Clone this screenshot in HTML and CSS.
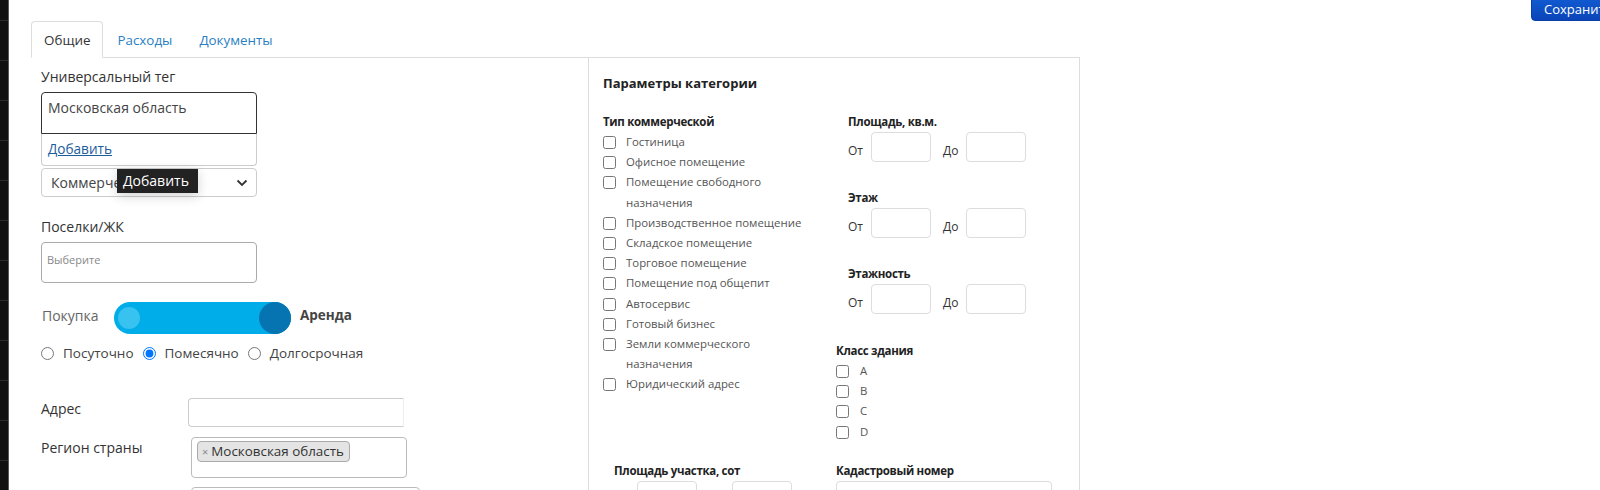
FILE: index.html
```html
<!DOCTYPE html>
<html lang="ru">
<head>
<meta charset="utf-8">
<title>Объект</title>
<link rel="stylesheet" href="styles.css">
</head>
<body>
<div class="page">
  <aside class="sidebar"></aside>
  <main class="main">
    <div class="wrap">
      <nav class="tabs">
        <a class="tab active">Общие</a>
        <a class="tab">Расходы</a>
        <a class="tab">Документы</a>
      </nav>
      <div class="content">
        <section class="left">
          <div class="label">Универсальный тег</div>
          <div class="taginput">Московская область</div>
          <div class="suggest"><a class="link">Добавить</a></div>
          <div class="select">
            <span>Коммерческая</span>
            <svg class="chev" width="12" height="8" viewBox="0 0 12 8"><path d="M1.5 1.5 6 6l4.5-4.5" fill="none" stroke="#333" stroke-width="1.8"/></svg>
            <div class="tooltip">Добавить</div>
          </div>

          <div class="label gap20">Поселки/ЖК</div>
          <div class="multi"><span class="ph">Выберите</span></div>

          <div class="toggle-row">
            <span class="tl">Покупка</span>
            <div class="toggle"><span class="dot"></span><span class="knob"></span></div>
            <span class="tr">Аренда</span>
          </div>

          <div class="radios">
            <label class="radio"><input type="radio" name="r">Посуточно</label>
            <label class="radio"><input type="radio" name="r" checked>Помесячно</label>
            <label class="radio"><input type="radio" name="r">Долгосрочная</label>
          </div>

          <div class="row row-addr">
            <span class="rl">Адрес</span>
            <div class="inp"></div>
          </div>
          <div class="row row-reg">
            <span class="rl">Регион страны</span>
            <div class="box"><span class="tag"><span class="x">×</span>Московская область</span></div>
          </div>
          <div class="row row-next">
            <span class="rl"></span>
            <div class="box2"></div>
          </div>
        </section>

        <section class="panel">
          <h3 class="ptitle">Параметры категории</h3>
          <div class="pgrid">
            <div class="pcol">
              <div class="h">Тип коммерческой</div>
              <label class="cb"><input type="checkbox"><span>Гостиница</span></label>
              <label class="cb"><input type="checkbox"><span>Офисное помещение</span></label>
              <label class="cb"><input type="checkbox"><span>Помещение свободного назначения</span></label>
              <label class="cb"><input type="checkbox"><span>Производственное помещение</span></label>
              <label class="cb"><input type="checkbox"><span>Складское помещение</span></label>
              <label class="cb"><input type="checkbox"><span>Торговое помещение</span></label>
              <label class="cb"><input type="checkbox"><span>Помещение под общепит</span></label>
              <label class="cb"><input type="checkbox"><span>Автосервис</span></label>
              <label class="cb"><input type="checkbox"><span>Готовый бизнес</span></label>
              <label class="cb"><input type="checkbox"><span>Земли коммерческого назначения</span></label>
              <label class="cb"><input type="checkbox"><span>Юридический адрес</span></label>
            </div>
            <div class="pcol">
              <div class="grp">
                <div class="h">Площадь, кв.м.</div>
                <div class="range"><span class="rlab">От</span><div class="ri"></div><span class="rlab do">До</span><div class="ri"></div></div>
              </div>
              <div class="grp">
                <div class="h">Этаж</div>
                <div class="range"><span class="rlab">От</span><div class="ri"></div><span class="rlab do">До</span><div class="ri"></div></div>
              </div>
              <div class="grp">
                <div class="h">Этажность</div>
                <div class="range"><span class="rlab">От</span><div class="ri"></div><span class="rlab do">До</span><div class="ri"></div></div>
              </div>
              <div class="cls">
                <div class="h">Класс здания</div>
                <label class="cb cbs"><input type="checkbox"><span>A</span></label>
                <label class="cb cbs"><input type="checkbox"><span>B</span></label>
                <label class="cb cbs"><input type="checkbox"><span>C</span></label>
                <label class="cb cbs"><input type="checkbox"><span>D</span></label>
              </div>
            </div>
            <div class="pcol plot">
              <div class="h">Площадь участка, сот</div>
              <div class="range"><span class="rlab">От</span><div class="ri"></div><span class="rlab do">До</span><div class="ri"></div></div>
            </div>
            <div class="pcol">
              <div class="h">Кадастровый номер</div>
              <div class="kad"></div>
            </div>
          </div>
        </section>
      </div>
    </div>
  </main>
  <button class="save">Сохранить</button>
</div>
</body>
</html>
```

FILE: styles.css
```css
* { box-sizing: border-box; }
html, body { margin: 0; padding: 0; }
body {
  font-family: "Open Sans", "Noto Sans", "Liberation Sans", sans-serif;
  font-size: 14px;
  color: #333;
  background: #fff;
  overflow: hidden;
}
.page {
  position: relative;
  display: flex;
  width: 1600px;
  height: 490px;
  overflow: hidden;
}
.sidebar {
  flex: 0 0 9px;
  background-color: #111;
  background-image: repeating-linear-gradient(to bottom, transparent 0 20px, #2b2b2b 20px 21px, transparent 21px 40px);
  border-right: 1px solid #5a5a5a;
}
.main {
  flex: 1;
  padding: 21px 0 0 22px;
}
.wrap { width: 1049px; }

/* tabs */
.tabs {
  display: flex;
  border-bottom: 1px solid #ddd;
  height: 37px;
}
.tab {
  padding: 8px 12px;
  line-height: 20px;
  border: 1px solid transparent;
  border-radius: 4px 4px 0 0;
  margin-right: 1px;
  color: #2a7fc3;
  font-size: 13.4px;
}
.tab.active {
  color: #333;
  border-color: #ddd;
  border-bottom-color: #fff;
  background: #fff;
  height: 37px;
}

.content { display: flex; align-items: flex-start; }

/* left column */
.left {
  flex: 0 0 557px;
  padding: 9px 0 0 10px;
}
.label { line-height: 20px; margin-bottom: 5px; color: #333; }
.gap20 { margin-top: 20px; }
.taginput {
  width: 216px;
  height: 42px;
  border: 1px solid #333;
  border-radius: 4px 4px 0 0;
  padding: 5px 6px;
  line-height: 20px;
  color: #444;
}
.suggest {
  width: 216px;
  height: 32px;
  border: 1px solid #ccc;
  border-top: none;
  border-radius: 0 0 4px 4px;
  padding: 5px 6px;
  line-height: 20px;
  font-size: 13.6px;
}
.link { color: #1b5c9c; text-decoration: underline; }
.select {
  position: relative;
  margin-top: 2px;
  width: 216px;
  height: 29px;
  border: 1px solid #ccc;
  border-radius: 4px;
  padding: 3px 9px;
  line-height: 21px;
  color: #444;
  display: flex;
  justify-content: space-between;
  align-items: center;
}
.chev { margin-right: -1px; }
.tooltip {
  position: absolute;
  left: 75px;
  top: 0;
  width: 81px;
  height: 24px;
  background: #222;
  color: #fff;
  padding: 1px 6px;
  line-height: 22px;
  box-shadow: 0 3px 12px rgba(0,0,0,0.18);
  white-space: nowrap;
}
.multi {
  width: 216px;
  height: 41px;
  border: 1px solid #aaa;
  border-radius: 4px;
  padding: 9px 5px;
  line-height: 14px;
}
.ph { font-size: 11px; color: #888; }

.toggle-row {
  display: flex;
  align-items: center;
  margin-top: 19px;
  height: 32px;
}
.tl { width: 73px; padding-left: 1px; color: #666; padding-bottom: 6px; }
.toggle {
  position: relative;
  width: 177px;
  height: 32px;
  border-radius: 16px;
  background: #01ade9;
}
.dot {
  position: absolute;
  left: 4px; top: 5px;
  width: 22px; height: 22px;
  border-radius: 50%;
  background: #38c2f0;
}
.knob {
  position: absolute;
  right: 0; top: 0;
  width: 32px; height: 32px;
  border-radius: 50%;
  background: #0774b2;
}
.tr { margin-left: 9px; font-weight: 700; color: #444; padding-bottom: 6px; font-size: 13.5px; }

.radios {
  display: flex;
  align-items: center;
  margin-top: 9px;
  height: 20px;
  color: #444;
  font-size: 13.5px;
}
.radio { display: flex; align-items: center; margin-right: 9px; line-height: 20px; }
.radio input { margin: 0 9px 0 0; width: 13px; height: 13px; }

.row { display: flex; align-items: flex-start; }
.rl { line-height: 20px; color: #333; }
.row-addr { margin-top: 35px; }
.row-addr .rl { width: 147px; padding-top: 1px; }
.inp {
  width: 216px;
  height: 29px;
  border: 1px solid #ccc;
  border-right-color: #eee;
  border-radius: 4px 0 0 4px;
}
.row-reg { margin-top: 10px; }
.row-reg .rl { width: 150px; padding-top: 1px; }
.box {
  width: 216px;
  height: 41px;
  border: 1px solid #bbb;
  border-radius: 4px;
  padding: 3px 5px;
}
.tag {
  display: inline-flex;
  align-items: center;
  height: 21px;
  padding: 0 5px 0 4px;
  background: #e4e4e4;
  border: 1px solid #aaa;
  border-radius: 4px;
  line-height: 19px;
  color: #333;
  font-size: 13.4px;
}
.x { font-size: 11px; color: #888; margin-right: 3px; }
.row-next { margin-top: 9px; }
.row-next .rl { width: 150px; }
.box2 {
  width: 229px;
  height: 40px;
  border: 1px solid #bbb;
  border-radius: 4px;
}

/* right panel */
.panel {
  flex: 0 0 492px;
  height: 440px;
  border: 1px solid #ddd;
  border-top: none;
  padding: 15px 14px 0 14px;
}
.ptitle {
  margin: 0;
  font-size: 13px;
  font-weight: 700;
  line-height: 20px;
  color: #222;
}
.pgrid {
  display: grid;
  grid-template-columns: 233px 1fr;
  row-gap: 18px;
  margin-top: 18px;
}
.h {
  font-size: 11.5px;
  font-weight: 700;
  letter-spacing: -0.3px;
  line-height: 20px;
  color: #222;
}
.pcol > .h:first-child { margin-top: 1px; }
.cb {
  display: flex;
  align-items: flex-start;
  font-size: 11.4px;
  line-height: 20.2px;
  color: #555;
}
.cb input {
  margin: 4px 10px 0 0;
  width: 13px;
  height: 13px;
  flex: 0 0 13px;
}
.cb span { max-width: 180px; }
.cbs input { margin-right: 11px; }

.grp { margin-left: 12px; margin-bottom: 26px; }
.grp .h { margin-top: 0; }
.grp:first-child .h { margin-top: 1px; }
.grp:nth-child(3) { margin-bottom: 27px; }
.range { display: flex; align-items: center; height: 30px; }
.rlab { width: 23px; font-size: 12px; color: #333; padding-top: 6px; }
.rlab.do { margin-left: 12px; }
.ri {
  width: 60px;
  height: 30px;
  border: 1px solid #ddd;
  border-radius: 4px;
}
.plot { padding-left: 11px; }
.kad {
  width: 216px;
  height: 30px;
  border: 1px solid #ddd;
  border-radius: 4px;
}

.save {
  position: absolute;
  top: -15px;
  left: 1531px;
  width: 100px;
  height: 36px;
  padding: 11px 0 0 12px;
  text-align: left;
  border: 1px solid #0a3fa8;
  border-radius: 4px;
  background: linear-gradient(#1368e0, #0b44b8);
  color: #fff;
  font-family: inherit;
  font-size: 13px;
  line-height: 16px;
}
```
